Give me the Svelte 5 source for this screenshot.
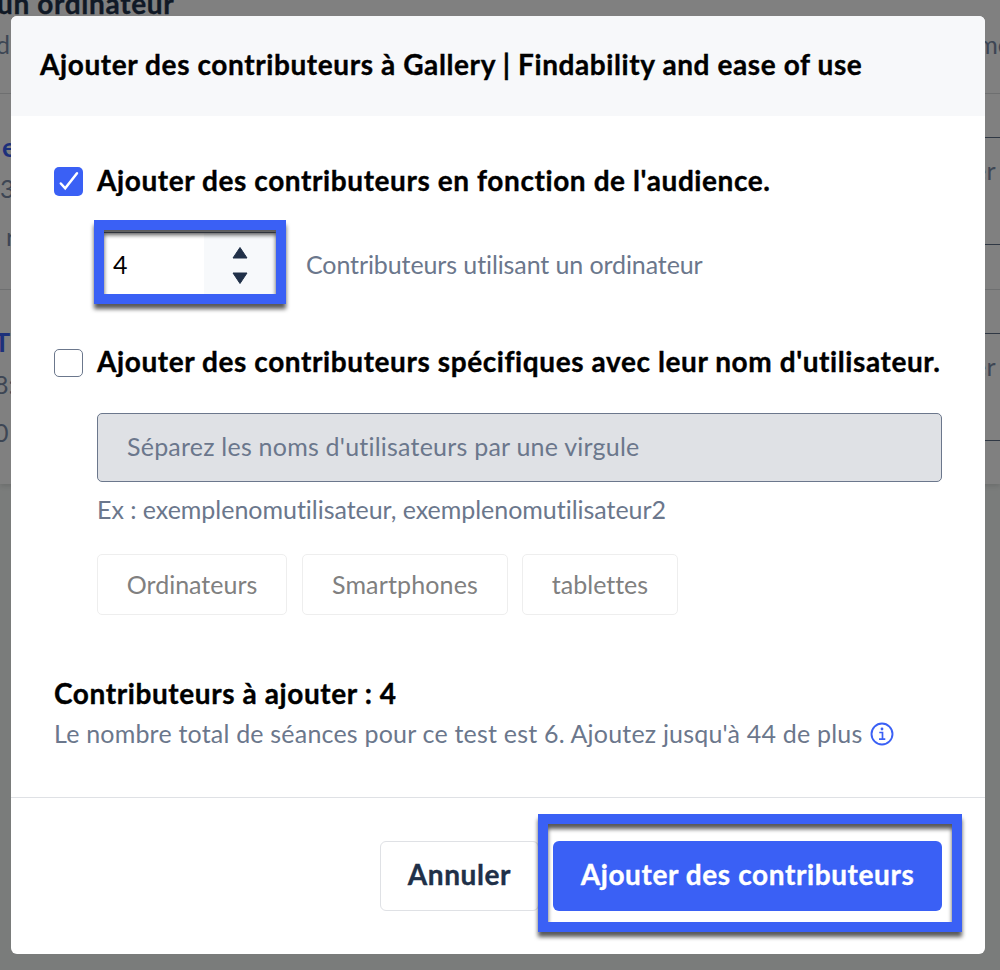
<script lang="ts">
	let count = $state(4);
	let byAudience = $state(true);
	let byUsername = $state(false);

	const devices = [
		{ label: 'Ordinateurs', kind: 'desktop' },
		{ label: 'Smartphones', kind: 'phone' },
		{ label: 'tablettes', kind: 'tablet' }
	];

	const rows = [
		{ title: 'e', lines: ['3', 'r'], action: 'er', kind: 'first' },
		{ title: 'T', lines: ['8:', '0'], action: 'er', kind: 'second' }
	];
</script>

{#snippet checkbox(checked: boolean, toggle: () => void, label: string)}
	<button class="checkbox" class:checked role="checkbox" aria-checked={checked} aria-label={label} onclick={toggle}>
		{#if checked}
			<svg viewBox="0 0 29 29" width="29" height="29" fill="none">
				<path d="M6.8 16.5L11.2 21.3L23 6.2" stroke="#fff" stroke-width="2.5" stroke-linecap="round" stroke-linejoin="miter" />
			</svg>
		{/if}
	</button>
{/snippet}

<div class="page">
	<div class="results" aria-hidden="true">
		<div class="results-head">
			<h2>un ordinateur</h2>
			<div class="results-cols"><span>d</span><span>me</span></div>
		</div>
		{#each rows as row}
			<div class="result {row.kind}">
				<div class="result-info">
					<strong>{row.title}</strong>
					{#each row.lines as line}
						<span>{line}</span>
					{/each}
				</div>
				<div class="result-action">{row.action}</div>
			</div>
		{/each}
	</div>

	<div class="overlay">
		<div class="modal" role="dialog" aria-modal="true">
			<header>
				<h1>Ajouter des contributeurs à Gallery | Findability and ease of use</h1>
			</header>

			<div class="body">
				<div class="option">
					{@render checkbox(byAudience, () => (byAudience = !byAudience), 'Audience')}
					<span class="option-label">Ajouter des contributeurs en fonction de l'audience.</span>
				</div>

				<div class="quantity">
					<div class="stepper">
						<span class="value">{count}</span>
						<div class="arrows">
							<button aria-label="+" onclick={() => count++}>
								<svg viewBox="0 0 16 12" width="16" height="12"><path d="M8 .5L15 11H1z" fill="#203048" stroke="#203048" stroke-linejoin="round" /></svg>
							</button>
							<button aria-label="-" onclick={() => count--}>
								<svg viewBox="0 0 16 12" width="16" height="12"><path d="M8 11.5L15 1H1z" fill="#203048" stroke="#203048" stroke-linejoin="round" /></svg>
							</button>
						</div>
						<div class="highlight"></div>
					</div>
					<span class="quantity-label">Contributeurs utilisant un ordinateur</span>
				</div>

				<div class="option">
					{@render checkbox(byUsername, () => (byUsername = !byUsername), 'Utilisateur')}
					<span class="option-label">Ajouter des contributeurs spécifiques avec leur nom d'utilisateur.</span>
				</div>

				<div class="usernames">
					<div class="field"><span>Séparez les noms d'utilisateurs par une virgule</span></div>
					<p class="example">Ex : exemplenomutilisateur, exemplenomutilisateur2</p>
					<div class="devices">
						{#each devices as device}
							<button class="device {device.kind}">{device.label}</button>
						{/each}
					</div>
				</div>

				<h3>Contributeurs à ajouter : {count}</h3>
				<div class="total">
					<span>Le nombre total de séances pour ce test est 6. Ajoutez jusqu'à 44 de plus</span>
					<svg viewBox="0 0 24 24" width="24" height="24" fill="none" stroke="#3a60f5" stroke-width="1.9">
						<circle cx="12" cy="12" r="10.5" />
						<path d="M9.3 10.5H12.5V17M9 17.1H15.3" stroke-width="1.7" />
						<circle cx="12" cy="7" r="1.4" fill="#3a60f5" stroke="none" />
					</svg>
				</div>
			</div>

			<footer>
				<button class="cancel">Annuler</button>
				<div class="submit-wrap">
					<button class="submit">Ajouter des contributeurs</button>
					<div class="highlight"></div>
				</div>
			</footer>
		</div>
	</div>
</div>

<style>
	:global(body) {
		background: #7a7c7b;
	}

	.page {
		position: relative;
		width: 1000px;
		height: 970px;
		overflow: hidden;
		font-family: Lato, 'Open Sans', sans-serif;
		font-size: 25px;
		font-variant-ligatures: none;
		color: #6b778c;
	}

	h1,
	h2,
	h3,
	p {
		margin: 0;
		white-space: nowrap;
	}

	button {
		font: inherit;
		letter-spacing: inherit;
		padding: 0;
		cursor: pointer;
	}

	span {
		white-space: nowrap;
	}

	h1,
	h2,
	h3,
	.option-label,
	footer button {
		-webkit-text-stroke: 0.35px currentColor;
	}

	/* Page behind the dialog */
	.results {
		height: 484px;
		background: #808080;
		color: #3d4654;
		box-shadow: 0 2px 5px rgba(0, 0, 0, 0.12);
	}

	.results-head {
		box-sizing: border-box;
		display: flow-root;
		height: 94px;
		border-bottom: 1px solid #6e6f70;
	}

	h2 {
		height: 30px;
		margin: -14px 0 0 -3px;
		font-size: 28px;
		line-height: 34px;
		color: #101926;
		letter-spacing: 0.65px;
	}

	.results-cols {
		display: flex;
		justify-content: space-between;
		height: 58px;
		line-height: 56px;
		margin: 0 -11px 0 -4px;
	}

	.result {
		box-sizing: border-box;
		display: flex;
		justify-content: space-between;
		height: 196px;
		padding-top: 43px;
		border-bottom: 1px solid #6e6f70;
	}

	.result.second {
		height: 194px;
		border-bottom: 0;
	}

	.result-info {
		display: flex;
		flex-direction: column;
	}

	.result-info strong {
		height: 28px;
		line-height: 20px;
		font-size: 27px;
		color: #1d307b;
		padding-left: 2px;
	}

	.result-info span {
		height: 48px;
		line-height: 46px;
	}

	.first .result-info span:last-child {
		padding-left: 6px;
	}

	.second .result-info {
		margin-left: -6px;
	}

	.second .result-info strong {
		padding-left: 0;
		line-height: 17px;
	}

	.result-action {
		box-sizing: border-box;
		width: 40px;
		height: 108px;
		padding-left: 13px;
		border: solid #303844;
		border-width: 1px 0;
		line-height: 64px;
		letter-spacing: 0.4px;
	}

	/* Dialog */
	.overlay {
		position: absolute;
		inset: 0;
		padding: 16px 15px 16px 11px;
	}

	.modal {
		display: flex;
		flex-direction: column;
		height: 938px;
		border-radius: 6px;
		background: #fff;
		overflow: hidden;
	}

	header {
		box-sizing: border-box;
		height: 100px;
		padding: 0 29px;
		background: #f7f8fa;
	}

	h1 {
		line-height: 96px;
		font-size: 28px;
		letter-spacing: 0.6px;
		color: #000;
	}

	.body {
		box-sizing: border-box;
		height: 681px;
		padding: 51px 43px 0;
	}

	.option {
		display: flex;
		align-items: center;
		gap: 14px;
		height: 29px;
	}

	.checkbox {
		box-sizing: border-box;
		flex: none;
		width: 29px;
		height: 29px;
		border: 1px solid #6b778c;
		border-radius: 5px;
		background: #fff;
	}

	.checkbox:not(.checked) {
		height: 28px;
		margin-top: 1px;
	}

	.checkbox.checked {
		border: 0;
		background: #3a60f5;
	}

	.checkbox svg {
		display: block;
	}

	.option-label {
		padding-bottom: 4px;
		font-size: 28px;
		font-weight: 700;
		letter-spacing: 0.59px;
		color: #000;
	}

	.quantity {
		display: flex;
		align-items: center;
		gap: 27px;
		height: 66px;
		margin: 36px 0 50px 43px;
	}

	.quantity-label {
		padding-bottom: 2px;
		letter-spacing: -0.1px;
	}

	.stepper {
		position: relative;
		box-sizing: border-box;
		display: flex;
		width: 182px;
		height: 66px;
		border: 1px solid #6b778c;
		border-radius: 5px;
		color: #000;
	}

	.value {
		width: 106px;
		padding-left: 15px;
		line-height: 62px;
		box-sizing: border-box;
	}

	.arrows {
		display: flex;
		flex: 1;
		flex-direction: column;
		align-items: center;
		justify-content: center;
		gap: 13px;
		padding-right: 2px;
		background: #f7f9fb;
	}

	.arrows button {
		height: 12px;
		border: 0;
		background: none;
	}

	.arrows svg {
		display: block;
	}

	/* Frame drawn over a control to point it out */
	.highlight {
		position: absolute;
		border: 10px solid #3a60f5;
		filter: drop-shadow(0 5px 2px rgba(0, 0, 0, 0.65));
		pointer-events: none;
	}

	.stepper .highlight {
		inset: -13px -8px -7px -4px;
	}

	.usernames {
		padding: 36px 0 0 43px;
	}

	.field {
		box-sizing: border-box;
		width: 845px;
		height: 69px;
		padding-left: 29px;
		border: 1px solid #6b778c;
		border-radius: 5px;
		background: #dfe1e5;
		line-height: 64px;
		letter-spacing: 0.22px;
	}

	.example {
		height: 72px;
		line-height: 54px;
		letter-spacing: -0.03px;
	}

	.devices {
		display: flex;
		gap: 15px;
	}

	.device {
		box-sizing: border-box;
		height: 61px;
		padding-bottom: 2px;
		border: 1px solid #eee;
		border-radius: 5px;
		background: #fff;
		color: #808080;
	}

	.desktop {
		width: 190px;
	}

	.phone {
		width: 206px;
		letter-spacing: 0.15px;
	}

	.tablet {
		width: 156px;
		margin-left: -1px;
	}

	h3 {
		margin-top: 58px;
		font-size: 28px;
		line-height: 40px;
		letter-spacing: 0.6px;
		color: #000;
	}

	.total {
		display: flex;
		align-items: center;
		gap: 8px;
		height: 41px;
		letter-spacing: 0.2px;
	}

	.total span {
		padding-bottom: 2px;
	}

	footer {
		box-sizing: border-box;
		display: flex;
		justify-content: flex-end;
		gap: 14px;
		flex: 1;
		padding: 43px 43px 0;
		border-top: 1px solid #dfe1e5;
	}

	footer button {
		box-sizing: border-box;
		height: 70px;
		padding-bottom: 5px;
		border-radius: 6px;
		font-size: 28px;
		font-weight: 700;
		letter-spacing: 0.6px;
	}

	.cancel {
		width: 159px;
		border: 1px solid #dfe1e5;
		background: #fff;
		color: #203048;
	}

	.submit-wrap {
		position: relative;
		width: 389px;
		height: 70px;
	}

	.submit {
		width: 100%;
		border: 0;
		background: #3a60f5;
		color: #fff;
	}

	.submit-wrap .highlight {
		inset: -27px -20px -21px -15px;
	}
</style>
